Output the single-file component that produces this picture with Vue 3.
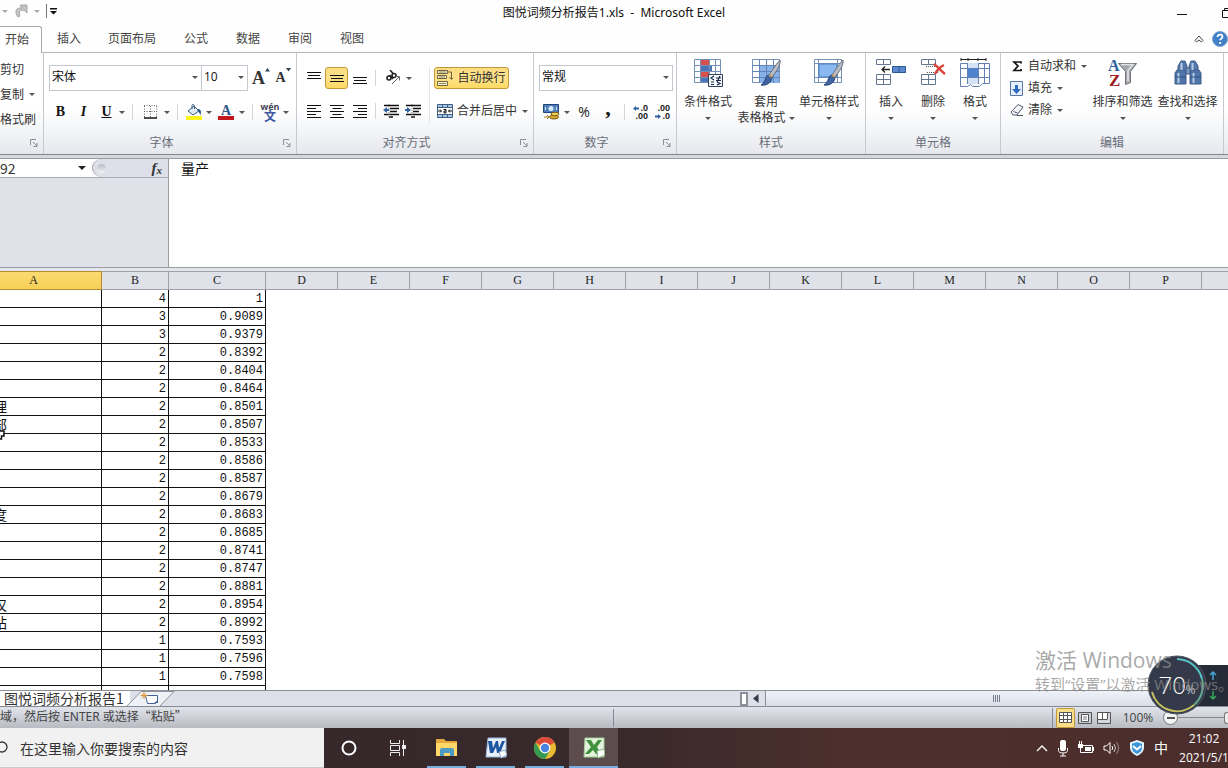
<script setup>
import { ref } from 'vue'

const tabs = ['开始', '插入', '页面布局', '公式', '数据', '审阅', '视图']
const columns = 'ABCDEFGHIJKLMNOPQ'.split('')
const rows = [
  ['', 4, '1'], ['', 3, '0.9089'], ['', 3, '0.9379'], ['', 2, '0.8392'], ['', 2, '0.8404'],
  ['', 2, '0.8464'], ['理', 2, '0.8501'], ['部', 2, '0.8507'], ['', 2, '0.8533'], ['', 2, '0.8586'],
  ['', 2, '0.8587'], ['', 2, '0.8679'], ['度', 2, '0.8683'], ['', 2, '0.8685'], ['', 2, '0.8741'],
  ['', 2, '0.8747'], ['', 2, '0.8881'], ['仅', 2, '0.8954'], ['站', 2, '0.8992'], ['', 1, '0.7593'],
  ['', 1, '0.7596'], ['', 1, '0.7598'], ['', '', ''],
]
const cellName = ref('92')
const formula = ref('量产')
const query = ref('')
</script>

<template>
  <div class="app">
    <header class="title-bar">
      <div class="quick">
        <i class="arr pale"></i>
        <button aria-label="恢复"><svg width="14" height="14" viewBox="0 0 14 14"><path d="M4 13C0 8 2 3 8 4l-2-3h7v8l-2-2C7 5 4 7 6 12z" fill="#c4c4c6" stroke="#9c9c9f" stroke-width=".8"/></svg></button>
        <i class="arr pale"></i>
        <span class="quick-line"></span>
        <svg width="7" height="7" viewBox="0 0 7 7"><path d="M0 0h7v1.500H0zM0 3h7L3.500 6.500z" fill="#111"/></svg>
      </div>
      <h1>图悦词频分析报告1.xls&nbsp; -&nbsp; Microsoft Excel</h1>
      <div class="win">
        <button aria-label="最小化"><svg width="10" height="12"><path d="M0 7.500h10" stroke="#111"/></svg></button>
        <button aria-label="还原"><svg width="12" height="12"><path d="M.5 3.500h8v7h-8zM2.500 3V1.500h8v8H9" fill="none" stroke="#111"/></svg></button>
      </div>
    </header>

    <nav class="tabs">
      <button v-for="(t, i) in tabs" :key="t" class="tab" :class="{ on: i === 0, wide: t.length > 2 }">{{ t }}</button>
      <div class="tab-tools">
        <button aria-label="折叠功能区"><svg width="10" height="8" viewBox="0 0 10 8"><path d="M1 5.500L5 1l4 4.500-1.500 1.500L5 5 2.500 7z" fill="#fff" stroke="#444"/></svg></button>
        <button aria-label="帮助"><svg width="16" height="16" viewBox="0 0 16 16"><circle cx="8" cy="8" r="7.500" fill="#4180c4" stroke="#7aa5d6"/><path d="M5.500 6c0-3.300 5-3.200 5-.3 0 1.800-2.300 1.800-2.300 3.600M8.200 11v2" stroke="#fff" stroke-width="1.800" fill="none"/></svg></button>
      </div>
    </nav>

    <section class="ribbon">
      <div class="group clip">
        <div class="body clip-body">
          <button>剪切</button>
          <button>复制<i class="arr"></i></button>
          <button>格式刷</button>
        </div>
        <div class="foot"><span></span><svg class="launch" width="8" height="8"><path d="M.5 6V.5H6M3 3l4 4M7 4v3.500H3.500" fill="none" stroke="#8a8f99"/></svg></div>
      </div>

      <div class="group font">
        <div class="body">
          <div class="row combos">
            <label class="combo name"><select aria-label="字体"><option>宋体</option></select><i class="arr"></i></label>
            <label class="combo size"><select aria-label="字号"><option>10</option></select><i class="arr"></i></label>
            <button class="grow" aria-label="增大字号"><b>A</b><svg width="5" height="4"><path d="M0 3.500h5L2.500 0z" fill="#345"/></svg></button>
            <button class="grow small" aria-label="减小字号"><b>A</b><svg width="5" height="4"><path d="M0 0h5L2.500 3.500z" fill="#345"/></svg></button>
          </div>
          <div class="row">
            <button class="w23 serif"><b>B</b></button>
            <button class="w23 serif"><b><i>I</i></b></button>
            <button class="w23 serif"><b><u>U</u></b></button>
            <i class="arr box8"></i><span class="sep"></span>
            <button class="w24" aria-label="边框"><svg width="14" height="14"><path d="M.5 1v11M6.500 1v11M12.500 1v11M0 .5h13M0 6.500h13" stroke="#666" stroke-dasharray="1 1.500"/><path d="M0 13h13" stroke="#111" stroke-width="1.500"/></svg></button>
            <i class="arr box8"></i><span class="sep"></span>
            <button class="w20" aria-label="填充颜色"><svg width="17" height="16" viewBox="0 0 17 16"><path d="M2 7l6-5 5 5-6 4z" fill="#dfeaf4" stroke="#3d5f80"/><path d="M6 5V1.500C6 0 8.500 0 8.500 2v3" fill="none" stroke="#3d5f80"/><path d="M12 5c3 0 3.500 3 2.500 6-1-1-1-3-3-4z" fill="#23598f"/><path d="M0 12h16v4H0z" fill="#fdf51b"/></svg></button>
            <i class="arr box10"></i>
            <button class="w24" aria-label="字体颜色"><span class="ink">A</span></button>
            <i class="arr box8"></i><span class="sep"></span>
            <button class="w22 wen" aria-label="拼音"><small>wén</small><span>文</span></button>
            <i class="arr box10"></i>
          </div>
        </div>
        <div class="foot"><span>字体</span><svg class="launch" width="8" height="8"><path d="M.5 6V.5H6M3 3l4 4M7 4v3.500H3.500" fill="none" stroke="#8a8f99"/></svg></div>
      </div>

      <div class="group align">
        <div class="body split">
          <div class="left">
            <div class="row first">
              <button class="w23" aria-label="顶端对齐"><svg width="14" height="14"><path d="M0 1.500h14M1 4.500h12M0 7.500h14" stroke="#111"/></svg></button>
              <button class="w23 hot" aria-label="垂直居中"><svg width="14" height="14"><path d="M0 4.500h14M1 7.500h12M0 10.500h14" stroke="#111"/></svg></button>
              <button class="w23" aria-label="底端对齐"><svg width="14" height="14"><path d="M0 6.500h14M1 9.500h12M0 12.500h14" stroke="#111"/></svg></button>
              <span class="sep tight"></span>
              <button class="w22 turn" aria-label="方向"><svg width="18" height="16" viewBox="0 0 18 16"><g fill="none" stroke="#222" stroke-width="1.600"><circle cx="4" cy="8" r="2"/><path d="M4.500 5l3.500 4"/><circle cx="9" cy="5.500" r="2"/><path d="M5 0l3.500 4"/></g><path d="M7 14l7-7M10.500 6.500h4v4" fill="none" stroke="#666"/></svg></button>
              <i class="arr box8"></i>
            </div>
            <div class="row">
              <button class="w23" aria-label="左对齐"><svg width="14" height="13"><path d="M0 .5h14M0 3.500h9M0 6.500h14M0 9.500h9M0 12.500h14" stroke="#111"/></svg></button>
              <button class="w23" aria-label="居中"><svg width="14" height="13"><path d="M0 .5h14M2.500 3.500h9M0 6.500h14M2.500 9.500h9M0 12.500h14" stroke="#111"/></svg></button>
              <button class="w23" aria-label="右对齐"><svg width="14" height="13"><path d="M0 .5h14M5 3.500h9M0 6.500h14M5 9.500h9M0 12.500h14" stroke="#111"/></svg></button>
              <span class="sep tight"></span>
              <button class="w22" aria-label="减少缩进量"><svg width="16" height="14"><path d="M1 1.500h15M7 4.500h9M7 7.500h7M1 10.500h15M6 13h4" stroke="#111" stroke-width="1.400"/><path d="M6 0v14" stroke="#777" stroke-dasharray="1 1"/><path d="M0 6l4-3v2h2v2H4v2z" fill="#2f62a3"/></svg></button>
              <button class="w22" aria-label="增加缩进量"><svg width="16" height="14"><path d="M1 1.500h15M8 4.500h8M8 7.500h6M1 10.500h15M6 13h4" stroke="#111" stroke-width="1.400"/><path d="M7 0v14" stroke="#777" stroke-dasharray="1 1"/><path d="M6 6L2 3v2H0v2h2v2z" fill="#2f62a3"/></svg></button>
            </div>
          </div>
          <div class="right">
            <div class="row first">
              <button class="hot wrap"><svg width="16" height="16"><path d="M.5.5h10v3H.5zM.5 5.500h9v3h-9zM.5 11.500h10v4H.5z" fill="#fff6cf" stroke="#6d6442"/><path d="M2 2h7M2 7h6M2 13.500h7" stroke="#8b8154"/><path d="M11 2h3.500v7M12.500 7l2 2.500L16 7.500" fill="none" stroke="#6d6442"/></svg>自动换行</button>
            </div>
            <div class="row">
              <button class="merge"><svg width="16" height="14"><path d="M.5.5h15v13H.5z" fill="#a9c4e4" stroke="#3d6187"/><path d="M1 4h14v6H1z" fill="#fff"/><path d="M5.500.5v3M10.500.5v3M5.500 10.500v3M10.500 10.500v3M.5 3.500h15M.5 10.500h15" stroke="#3d6187"/><path d="M1 7h3.500M11.500 7H15M3 5.500L4.500 7 3 8.500M13 5.500L11.500 7 13 8.500M6.500 5.500h2.500V9H7V7h2" stroke="#111" fill="none"/></svg>合并后居中<i class="arr"></i></button>
            </div>
          </div>
        </div>
        <div class="foot"><span>对齐方式</span><svg class="launch" width="8" height="8"><path d="M.5 6V.5H6M3 3l4 4M7 4v3.500H3.500" fill="none" stroke="#8a8f99"/></svg></div>
      </div>

      <div class="group number">
        <div class="body">
          <div class="row combos">
            <label class="combo format"><select aria-label="数字格式"><option>常规</option></select><i class="arr"></i></label>
          </div>
          <div class="row">
            <button class="w24" aria-label="会计数字格式"><svg width="17" height="16"><path d="M.5.5h15v8H.5z" fill="#4f7fbd" stroke="#1f4677"/><circle cx="8" cy="4.500" r="2.500" fill="#dce9f6"/><path d="M2.500 3v3M13.500 3v3" stroke="#dce9f6"/><ellipse cx="11" cy="13" rx="4.500" ry="2" fill="#d8a92f" stroke="#7a5c12"/><ellipse cx="12" cy="10" rx="4" ry="1.800" fill="#f2cf5c" stroke="#7a5c12"/><path d="M1 13h5M4 11l2 2-2 2" stroke="#a77720" fill="none"/></svg></button>
            <i class="arr box8"></i>
            <button class="w26 pct">%</button>
            <button class="w22 comma">,</button>
            <span class="sep snug"></span>
            <button class="w21 dec" aria-label="增加小数位数"><span><svg width="6" height="5"><path d="M0 2.500L3 0v1.500h3v2H3V5z" fill="#2f62a3"/></svg>.0</span><span>.00</span></button>
            <button class="w22 dec" aria-label="减少小数位数"><span>.00</span><span><svg width="6" height="5"><path d="M6 2.500L3 0v1.500H0v2h3V5z" fill="#2f62a3"/></svg>.0</span></button>
          </div>
        </div>
        <div class="foot"><span>数字</span><svg class="launch" width="8" height="8"><path d="M.5 6V.5H6M3 3l4 4M7 4v3.500H3.500" fill="none" stroke="#8a8f99"/></svg></div>
      </div>

      <div class="group styles">
        <div class="body bigs">
          <button class="big w58">
            <svg width="30" height="30"><path d="M1.500 1.500h26v23h-26z" fill="#fff" stroke="#7791b5"/><path d="M8 2h8v6H8zM8 14h8v5H8z" fill="#d8504e"/><path d="M8 8h11v6H8zM8 19h8v5H8z" fill="#4c74b8"/><path d="M7.500 1v24M16.500 1v24M22.500 1v24M1 7.500h27M1 13.500h27M1 19.500h27" stroke="#7791b5"/><path d="M15.500 16.500h14v12h-14z" fill="#f5f8fc" stroke="#33415c"/><path d="M21 18l-3 2 3 2M18 24h3M18 26.500h3M23 20h5M23 22.500h5M27 18l-3 6M24 24l3 1.500-3 1.500" fill="none" stroke="#1c2a45" stroke-width="1.200"/></svg>
            <span>条件格式</span><i class="arr"></i>
          </button>
          <button class="big w58">
            <svg width="30" height="30"><path d="M1.500 1.500h27v23h-27z" fill="#fff" stroke="#7791b5"/><path d="M8 8h20v17H8z" fill="#86b2e8"/><path d="M8.500 1v24M15.500 1v24M22.500 1v24M1 7.500h28M1 13.500h28M1 19.500h28" stroke="#6285b8"/><path d="M29 2c1 5-4 12-8 17l-3-2C22 11 26 5 29 2z" fill="#b8bcc4" stroke="#666d7a"/><path d="M18 17c-4 0-3 7-8 10 5 1 11-2 11-8z" fill="#3f64a0" stroke="#2d4979"/><path d="M18 17l3 2" stroke="#c7975b" stroke-width="2"/></svg>
            <span>套用</span><span class="two">表格格式<i class="arr"></i></span>
          </button>
          <button class="big w68">
            <svg width="32" height="30"><path d="M1.500 1.500h27v23h-27z" fill="#fff" stroke="#7791b5"/><path d="M1 5.500h28M1 19.500h28M5.500 1v24M24.500 1v24" stroke="#7791b5"/><path d="M6 6h18v13H6z" fill="#8ab8f0" stroke="#4e7fc2"/><path d="M30 2c1 5-4 12-8 17l-3-2C23 11 27 5 30 2z" fill="#b8bcc4" stroke="#666d7a"/><path d="M19 17c-4 0-3 7-8 10 5 1 11-2 11-8z" fill="#3f64a0" stroke="#2d4979"/><path d="M19 17l3 2" stroke="#c7975b" stroke-width="2"/></svg>
            <span>单元格样式</span><i class="arr"></i>
          </button>
        </div>
        <div class="foot"><span>样式</span></div>
      </div>

      <div class="group cells">
        <div class="body bigs">
          <button class="big w42">
            <svg width="30" height="30"><path d="M.5 1.500h14v5H.5zM7.500 1.500v5M.5 16.500h14v10H.5zM7.500 16.500v10M.5 21.500h14" fill="#fff" stroke="#667791"/><path d="M16.500 8.500h13v6h-13z" fill="#5c89cd" stroke="#2e5796"/><path d="M23 8v7" stroke="#2e5796"/><path d="M6 11.500h8M9 8.500l-3 3 3 3" fill="none" stroke="#222" stroke-width="1.300"/></svg>
            <span>插入</span><i class="arr"></i>
          </button>
          <button class="big w42">
            <svg width="26" height="30"><path d="M1.500 1.500h14v5h-14zM8.500 1.500v5M1.500 16.500h14v10h-14zM8.500 16.500v10M1.500 21.500h14" fill="#fff" stroke="#667791"/><path d="M6 8.500h12v6H6" fill="none" stroke="#555" stroke-dasharray="1 1"/><path d="M14 6c3 2 7 7 11 10M24 7c-4 2-7 5-9 9" stroke="#dc4237" stroke-width="2.400" fill="none"/></svg>
            <span>删除</span><i class="arr"></i>
          </button>
          <button class="big w42">
            <svg width="32" height="30"><path d="M2 1.500h25M2 0v3M27 0v3M9 0v3M19 0v3" stroke="#222"/><path d="M1.500 5.500h29v20h-7l-3 3h-7l-2-2-3 2h-7z" fill="#fff" stroke="#6281b1"/><path d="M9 11h10v8H9z" fill="#4f83d0"/><path d="M9 5h10v5H9zM9 20h10v6H9z" fill="#d4e3f6"/><path d="M8.500 5v21M19.500 5v21M25.500 5v20M1 10.500h29M1 19.500h29" stroke="#6281b1"/></svg>
            <span>格式</span><i class="arr"></i>
          </button>
        </div>
        <div class="foot"><span>单元格</span></div>
      </div>

      <div class="group edit">
        <div class="body edit-body">
          <div class="edit-list">
            <button><svg width="14" height="14"><path d="M11 4.500V3H4l4 4-4 4.500h7V10" fill="none" stroke="#111" stroke-width="1.700"/></svg>自动求和<i class="arr"></i></button>
            <button><svg width="14" height="15"><path d="M.5.5h12v14H.5z" fill="#e7f0fa" stroke="#5576a5"/><path d="M5 4h3v4h3l-4.500 5L2 8h3z" fill="#2f6bc0"/></svg>填充<i class="arr"></i></button>
            <button><svg width="14" height="14"><path d="M1 9l7-7.500 5 2.500-6 8H3z" fill="#f5f6f9" stroke="#4e5668"/><path d="M3.500 8.500l4 1.500M7 12.500h6" stroke="#4e5668"/></svg>清除<i class="arr"></i></button>
          </div>
          <button class="big w65">
            <svg width="30" height="30"><path d="M10.500 5.500h18l-6 8v11l-5 2v-13z" fill="#a5a8ae" stroke="#6d7077"/><path d="M13 6.500h12l-5 6v11" fill="none" stroke="#e1e3e7" stroke-width="1.500"/><text x="0" y="13" font-family="Liberation Serif" font-weight="bold" font-size="16" fill="#2d5f9e">A</text><text x="1" y="28" font-family="Liberation Serif" font-weight="bold" font-size="17" fill="#9d2020">Z</text></svg>
            <span>排序和筛选</span><i class="arr"></i>
          </button>
          <button class="big w65">
            <svg width="28" height="30"><path d="M7 3h4l2 5v6H4V8zM17 3h4l3 5v6h-9V8z" fill="#5478ab" stroke="#3e5d8c"/><path d="M3 12h8l1 3v11H1V15zM17 12h8l2 3v11H16V15z" fill="#4f74aa" stroke="#3e5d8c"/><path d="M12 10h4v6h-4z" fill="#7c99c2" stroke="#3e5d8c"/><path d="M4.500 15v10M19.500 15v10M7.500 5v7M18.500 5v7" stroke="#b8cbe4" stroke-width="2"/><path d="M1 19h11M16 19h11" stroke="#35527f"/></svg>
            <span>查找和选择</span><i class="arr"></i>
          </button>
        </div>
        <div class="foot"><span>编辑</span></div>
      </div>
    </section>

    <section class="formula">
      <div class="name-side">
        <div class="name-row">
          <input v-model="cellName" aria-label="名称框"><i class="arr dark"></i>
          <div class="fx"><span class="knob"></span><button aria-label="插入函数"><i>f</i><i class="x">x</i></button></div>
        </div>
      </div>
      <textarea v-model="formula" aria-label="编辑栏"></textarea>
    </section>

    <main class="sheet">
      <table>
        <colgroup><col class="ca"><col class="cb"><col class="cc"><col v-for="n in 14" :key="n" class="cn"></colgroup>
        <thead><tr><th v-for="c in columns" :key="c" :class="{ sel: c === 'A' }">{{ c }}</th></tr></thead>
        <tbody>
          <tr v-for="(r, i) in rows" :key="i">
            <td class="word">{{ r[0] }}</td><td>{{ r[1] }}</td><td>{{ r[2] }}</td>
          </tr>
        </tbody>
      </table>
      <svg class="cursor" width="6" height="11"><path d="M0 2h4v5H1.500v3H0" fill="#fff" stroke="#111" stroke-width="1.500"/></svg>
    </main>

    <div class="sheet-bar">
      <button class="sheet-tab">图悦词频分析报告1</button>
      <button class="new-tab" aria-label="插入工作表"><svg width="50" height="15"><path d="M0 15L14 .5h33L33 15" fill="#eef1f6" stroke="#8d929c"/><path d="M18.500 4.500h12v6l-2 2h-8z" fill="#fff" stroke="#45639a"/><path d="M27 12l4-3v3z" fill="#45639a"/><path d="M17 1v7M13.500 4.500h7M15 2.500l4 4M19 2.500l-4 4" stroke="#dd9a3c"/></svg></button>
      <div class="hscroll">
        <span class="split-box"></span>
        <button aria-label="向左滚动"><svg width="6" height="9"><path d="M5.500 0v9L0 4.500z" fill="#333a48"/></svg></button>
        <div class="thumb"><svg width="8" height="7"><path d="M.5 0v7M2.500 0v7M4.500 0v7M6.500 0v7" stroke="#777e8b"/></svg></div>
      </div>
    </div>

    <footer class="status">
      <span class="msg">域，然后按 ENTER 或选择<span class="cjk">“粘贴”</span></span>
      <span class="status-mid"></span>
      <div class="views">
        <button class="view on" aria-label="普通"><svg width="13" height="11"><path d="M.5.5h12v10H.5zM4.500 0v11M8.500 0v11M0 3.500h13M0 7.500h13" fill="#fff" stroke="#555"/></svg></button>
        <button class="view" aria-label="页面布局"><svg width="14" height="12"><path d="M.5.5h13v11H.5z" fill="#c9ccd2" stroke="#555"/><path d="M3.500 2.500h7v7h-7z" fill="#fff" stroke="#555"/><path d="M5 5h4M5 7h4" stroke="#777"/></svg></button>
        <button class="view" aria-label="分页预览"><svg width="14" height="12"><path d="M.5.5h13v11H.5z" fill="#d5d7dc" stroke="#555"/><path d="M1 1h4v6H1zM6 1h4v6H6z" fill="#fff"/><path d="M5.500 0v7.500M10.500 0v7.500M1 7.500h9" stroke="#555"/></svg></button>
        <button class="zoom">100%</button>
        <button class="minus" aria-label="缩小"></button>
        <span class="track"></span><span class="slider"></span>
      </div>
    </footer>

    <div class="taskbar">
      <div class="search"><svg width="8" height="14"><circle cx="2" cy="6" r="5" fill="none" stroke="#333" stroke-width="1.300"/></svg><input v-model="query" placeholder="在这里输入你要搜索的内容" aria-label="搜索"></div>
      <button class="task" aria-label="Cortana"><svg width="16" height="16"><circle cx="8" cy="8" r="6.500" fill="none" stroke="#fff" stroke-width="2"/></svg></button>
      <button class="task" aria-label="任务视图"><svg width="17" height="16"><path d="M1.500 0v3.500h9V0M1.500 16v-3.500h9V16M1.500 5.500h9v5h-9zM14.500 0v16" fill="none" stroke="#eee"/><path d="M13 5h4v4h-4z" fill="#eee"/></svg></button>
      <button class="task run" aria-label="文件资源管理器"><svg width="22" height="20"><path d="M0 1h8l2 2h11v15H0z" fill="#e3a93c"/><path d="M0 5h21v13H0z" fill="#ffd869"/><path d="M4 18v-6q0-2 2-2h10q2 0 2 2v6h-4v-3H8v3z" fill="#4d9bc4"/></svg></button>
      <button class="task run" aria-label="Word"><svg width="22" height="22"><path d="M3 1h18v19H1z" fill="#e8f0fa" stroke="#9bb8dd"/><path d="M3 4h4l1 7 3-7h2l1 7 3-7h3l-5 12h-3l-1-6-3 6H5z" fill="#1d559f"/><path d="M14 15l6-2 2 5-6 3z" fill="#fff" stroke="#8ba6c8"/></svg></button>
      <button class="task run" aria-label="Chrome"><svg width="22" height="22" viewBox="0 0 22 22"><circle cx="11" cy="11" r="11" fill="#e9b92f"/><path d="M11 11L1.500 5.500A11 11 0 0 1 20.500 5.500z" fill="#dc4b3c"/><path d="M1.500 5.500A11 11 0 0 0 11 22l5-8.500H6z" fill="#349a53"/><circle cx="11" cy="11" r="5.400" fill="#fff"/><circle cx="11" cy="11" r="4.200" fill="#4884df"/></svg></button>
      <button class="task run active" aria-label="Excel"><svg width="22" height="22"><path d="M2 1h19v19H1z" fill="#e4f2dd" stroke="#a5cf97"/><path d="M3 3h5l3 5 4-5h4l-5 7 4 7h-5l-3-4-4 4H2l6-7z" fill="#3f9140"/><path d="M14 14l7-2 1 6-7 3z" fill="#fff" stroke="#8cb382"/></svg></button>
      <div class="tray">
        <svg width="12" height="8"><path d="M1 7l5-5 5 5" fill="none" stroke="#fff" stroke-width="1.300"/></svg>
        <svg width="12" height="17"><rect x="3" y="0" width="6" height="11" rx="2" fill="#fff"/><path d="M1.500 8v2.500q0 2.500 4.500 2.500t4.500-2.500V8M6 13v3M3 16h6" fill="none" stroke="#fff"/></svg>
        <svg width="16" height="14"><path d="M5 4.500h9.500v7H5" fill="none" stroke="#fff"/><path d="M7 6h6v4H7zM14 6h2v4h-2zM0 3h5v4H0z" fill="#fff"/><path d="M1.500 0v3M3.500 0v3M2.500 7v4.500H6" fill="none" stroke="#fff"/></svg>
        <svg width="17" height="14"><path d="M1 5h2.500L7 1.500v11L3.500 9H1z" fill="none" stroke="#fff"/><path d="M9 5q1.500 2 0 4" fill="none" stroke="#fff"/><path d="M11 3q3 4 0 8" fill="none" stroke="#ccc"/><path d="M13.500 1q4 6 0 12" fill="none" stroke="#998f90"/></svg>
        <svg width="16" height="16"><path d="M8 0l7 2.500v5Q15 13 8 16 1 13 1 7.500v-5z" fill="#eaf6ff"/><path d="M8 2l5 1.800v4Q13 12 8 14 3 12 3 7.800v-4z" fill="#3d97d6"/><path d="M4 6l4 3.500L12 6" fill="none" stroke="#fff" stroke-width="2"/></svg>
        <span class="ime">中</span>
        <time><span>21:02</span><span>2021/5/1</span></time>
      </div>
    </div>

    <div class="gauge-panel"><svg width="8" height="30"><path d="M4 9V1M1 4l3-3 3 3" fill="none" stroke="#44a6d8" stroke-width="1.500"/><path d="M4 20v8M1 25l3 3 3-3" fill="none" stroke="#36a65a" stroke-width="1.500"/></svg></div>
    <div class="gauge">
      <svg width="60" height="60"><circle cx="30" cy="30" r="29" fill="#343a49" stroke="#4c5363"/><path d="M30 4a26 26 0 0 1 25 20" fill="none" stroke="#58c2c4" stroke-width="2"/><path d="M55 24a26 26 0 0 1-8 26" fill="none" stroke="#63a88d" stroke-width="2"/><path d="M47 50A26 26 0 0 1 5 37" fill="none" stroke="#c7c160" stroke-width="2"/></svg>
      <strong>70<small>%</small></strong>
    </div>
    <div class="watermark"><p>激活 Windows</p><p>转到“设置”以激活 Windows。</p></div>
  </div>
</template>

<style>
html, body { overflow: hidden; }
</style>

<style scoped>
.app { position: relative; height: 100vh; display: flex; flex-direction: column; overflow: hidden; background: #fff; color: #333; font: 12px/16px "Open Sans", "Noto Sans CJK SC", sans-serif; }
* { box-sizing: border-box; }
button { display: flex; align-items: center; justify-content: center; border: 0; padding: 0; background: none; color: inherit; font: inherit; white-space: nowrap; }
svg { display: block; flex: none; }
.arr { flex: none; width: 0; height: 0; border: 3px solid transparent; border-top-color: #555; border-bottom: 0; }
.arr.pale { border-top-color: #aaa; }
.arr.dark { border-width: 4px 4px 0; border-top-color: #222; }
.box8 { margin: 0 1px; }
.box10 { margin: 0 2px; }

.title-bar { flex: none; height: 26px; display: grid; grid-template-columns: 1fr auto 1fr; align-items: center; background: #fefefe; }
.quick { display: flex; align-items: center; gap: 6px; padding: 0 0 4px 2px; }
.quick-line { width: 1px; height: 14px; background: #777; }
.quick > svg { margin-left: -3px; }
h1 { margin: 0; font: 12px/16px "Noto Sans", "Noto Sans CJK SC", sans-serif; color: #111; }
.win { display: flex; justify-content: flex-end; gap: 35px; margin-right: -6px; }

.tabs { flex: none; height: 27px; display: flex; border-bottom: 1px solid #b3b6bb; background: #fefefe; }
.tab { width: 48px; margin-right: 4px; color: #444; }
.tab:nth-child(2) { margin-left: 3px; margin-right: 0; }
.tab.wide { width: 70px; margin: 0 5px 0 4px; }
.tab.on { width: 42px; margin: 0 0 -1px; padding-right: 7px; border: solid #a5a8ad; border-width: 1px 1px 0 0; border-radius: 0 3px 0 0; background: #fff; }
.tab-tools { margin: 0 0 0 auto; display: flex; align-items: center; gap: 8px; }

.ribbon { flex: none; display: flex; height: 102px; border-bottom: 1px solid #85888f; background: linear-gradient(#fff 55%, #f2f3f6 80%, #e6e8ee); overflow: hidden; }
.group { flex: none; display: flex; flex-direction: column; border-right: 1px solid #c6c9cf; }
.clip { width: 44px; }
.font { width: 253px; }
.align { width: 237px; }
.number { width: 143px; }
.styles { width: 189px; }
.cells { width: 135px; }
.edit { width: 223px; }
.body { height: 82px; padding: 12px 0 0 5px; }
.foot { height: 16px; display: flex; align-items: center; color: #686d78; }
.foot span { flex: 1; text-align: center; }
.launch { margin: 0 5px 0 4px; }
.row { display: flex; align-items: center; height: 22px; }
.row.combos { height: 26px; margin-bottom: 10px; }
.row.first { margin-bottom: 11px; }
.clip-body { padding: 4px 0 0; display: flex; flex-direction: column; align-items: flex-start; }
.clip-body button { height: 25px; gap: 5px; }
.combo { position: relative; height: 26px; }
.combo select { appearance: none; width: 100%; height: 26px; border: 1px solid #c5c8ce; border-radius: 0; background: #fff; padding: 0 0 2px 2px; font: inherit; color: #111; }
.combo .arr { position: absolute; right: 4px; top: 11px; }
.combo.name { width: 153px; }
.combo.size { width: 47px; margin-left: -1px; }
.combo.format { width: 134px; }
.row .grow { align-items: flex-start; width: 22px; height: 20px; font: 18px/20px "Liberation Serif", serif; margin-left: 2px; }
.row .grow.small { font-size: 14px; width: 18px; }
.w20 { width: 20px; } .w21 { width: 21px; } .w22 { width: 22px; } .w23 { width: 23px; }
.w24 { width: 24px; } .w26 { width: 26px; } .w42 { width: 42px; } .w58 { width: 58px; }
.w65 { width: 65px; } .w68 { width: 68px; }
.row button { height: 22px; flex: none; }
.serif { font: 14px/16px "Liberation Serif", serif; color: #111; }
.sep { width: 1px; height: 16px; margin: 0 6px; background: #d2d5da; }
.sep.tight { margin: 0 4px; }
.sep.snug { margin: 0 5px; }
.ink { height: 16px; width: 16px; border-bottom: 4px solid #c3161c; color: #2d558d; font: bold 14px/13px "Liberation Serif", serif; }
.row .wen { flex-direction: column; font-weight: 700; color: #445; }
.wen small { font-size: 9px; line-height: 9px; }
.wen span { font-size: 12px; line-height: 12px; color: #3c57a0; }
.hot { border: 1px solid #c2983a; border-radius: 3px; background: linear-gradient(#fbdc80, #fde28a 50%, #fdd963); }
.split { display: flex; padding-top: 14px; }
.left { width: 127px; }
.right { padding-left: 4px; border-left: 1px solid #e2e4e8; height: 56px; }
.wrap { width: 75px; gap: 4px; }
.turn { margin-left: 3px; }
.merge { gap: 4px; padding-left: 3px; }
.merge .arr { margin-left: 1px; }
.pct { font-size: 14px; color: #222; }
.comma { font: bold 22px/22px "Liberation Serif", serif; padding-bottom: 9px; color: #111; }
.row .dec { flex-direction: column; align-items: flex-end; justify-content: center; padding-right: 3px; font: bold 9px/8px "Liberation Sans", sans-serif; color: #222; }
.dec span { display: flex; align-items: center; gap: 1px; }
.bigs, .edit-body { display: flex; padding: 5px 0 0 2px; }
.cells .bigs { padding-left: 4px; }
.big { flex-direction: column; justify-content: flex-start; align-self: flex-start; }
.big svg { margin-bottom: 6px; }
.big > .arr { margin-top: 7px; }
.big .two { display: flex; align-items: center; gap: 3px; }
.edit-list { width: 87px; padding-left: 7px; margin-top: -3px; }
.edit-list button { height: 22px; gap: 4px; }
.edit-list .arr { margin-left: 1px; }

.formula { flex: none; display: flex; height: 110px; margin-top: 3px; border: solid #9a9da4; border-width: 1px 0; background: #dfe2e9; box-shadow: 0 -3px #d6d8de; }
.name-side { width: 169px; border-right: 1px solid #9a9da4; }
.name-row { height: 19px; display: flex; align-items: center; border-bottom: 1px solid #a9acb3; background: #fff; }
.name-row input { flex: none; width: 78px; height: 17px; border: 0; padding: 0; background: none; font: 14px/17px "Noto Sans CJK SC", sans-serif; color: #333; }
.fx { flex: 1; height: 18px; display: flex; align-items: center; justify-content: space-between; margin-left: 6px; padding: 0 6px 0 4px; border-left: 1px solid #a3a6ad; border-radius: 9px 0 0 9px; background: #dde0e8; }
.knob { width: 9px; height: 9px; border-radius: 50%; background: linear-gradient(#b5b9c2, #f5f6f8); }
.fx button { font: bold 15px/16px "Liberation Serif", serif; }
.fx .x { font-size: 11px; padding-top: 3px; }
textarea { flex: 1; border: 0; outline: 0; resize: none; padding: 0 12px; background: #fff; font: 14px/18px "Noto Sans CJK SC", sans-serif; color: #111; }

.sheet { position: relative; flex: 1; min-height: 0; margin-top: 3px; overflow: hidden; background: #fff; box-shadow: 0 -3px #e3e5ea; }
table { table-layout: fixed; width: 1274px; border-collapse: separate; border-spacing: 0; }
.ca { width: 102px; } .cb { width: 67px; } .cc { width: 97px; } .cn { width: 72px; }
th { height: 19px; padding: 0; border: solid #9ea1a8; border-width: 1px 1px 1px 0; background: #dfe2e9; font: 12px/17px "Liberation Serif", serif; color: #222; }
th.sel { background: linear-gradient(#fbdc72, #f6cf56); border-color: #b58c32; padding-right: 34px; }
td { height: 18px; padding: 2px 2px 0 0; border: solid #111; border-width: 0 1px 1px 0; text-align: right; font: 12px/15px "Liberation Mono", monospace; color: #111; overflow: hidden; }
td.word { text-align: left; text-indent: -7px; font: 14px/15px "Noto Sans CJK SC", sans-serif; padding-top: 0; }
.cursor { position: absolute; left: 0; top: 158px; }

.sheet-bar { flex: none; height: 16px; display: flex; border-top: 1px solid #8d9099; background: #dde0e8; }
.sheet-tab { height: 15px; padding: 0 6px 0 4px; background: #fff; font: 14px/15px "Noto Sans CJK SC", sans-serif; }
.new-tab { margin-left: -3px; }
.hscroll { margin-left: auto; width: 488px; display: flex; align-items: center; gap: 5px; }
.split-box { width: 8px; height: 14px; border: 2px solid #8b8f98; background: #fff; }
.thumb { flex: 1; height: 15px; margin-left: 1px; display: flex; align-items: center; justify-content: center; border-left: 1px solid #8b8f98; background: linear-gradient(#f0f2f8, #d9dde7); }

.status { flex: none; height: 22px; display: flex; align-items: center; border-top: 1px solid #858992; background: linear-gradient(#e1e4eb, #b8bbc2); color: #444; }
.msg { width: 613px; padding-bottom: 2px; white-space: nowrap; font-family: "Noto Sans", "Noto Sans CJK SC", sans-serif; }
.cjk { font-family: "Noto Sans CJK SC", sans-serif; }
.status-mid { width: 1px; height: 18px; background: #858992; }
.views { margin-left: auto; width: 176px; display: flex; align-items: center; height: 20px; border-left: 1px solid #858992; padding-left: 3px; }
.view { flex: none; width: 19px; height: 20px; }
.view.on { border: 1px solid #c2983a; border-radius: 2px; background: #fbdf88; }
.zoom { flex: none; width: 44px; margin-left: 3px; }
.minus { width: 15px; height: 15px; margin-left: 3px; border: 1px solid #777; border-radius: 50%; background: #f3f4f6; flex: none; }
.minus::after { content: ""; width: 8px; height: 2px; background: #555; }
.track { flex: 1; height: 1px; background: #888; }
.slider { width: 4px; height: 12px; border: 1px solid #777; border-right: 0; border-radius: 3px 0 0 3px; background: #eee; }

.taskbar { flex: none; height: 40px; display: flex; background: linear-gradient(90deg, #33262a, #38292b 50%, #4d302c 70%, #4b2e2b); color: #fff; }
.search { width: 324px; display: flex; align-items: center; background: #f2f1f1; border-bottom: 1px solid #ccc; }
.search input { flex: 1; height: 38px; border: 0; outline: 0; padding: 0; margin-left: 12px; background: none; font: 14px/20px "Noto Sans CJK SC", sans-serif; color: #222; }
.search input::placeholder { color: #333; opacity: 1; }
.task { position: relative; width: 49px; height: 40px; }
.run::after { content: ""; position: absolute; left: 5px; right: 5px; bottom: 0; height: 2px; background: #76aee0; }
.active { background: #5d4c4e; }
.active::after { left: 0; right: 0; }
.tray { margin-left: auto; width: 192px; display: flex; align-items: center; justify-content: space-between; }
.ime { font-size: 14px; }
time { width: 50px; display: flex; flex-direction: column; align-items: center; line-height: 19px; margin-left: 4px; margin-right: -1px; }
.tray > svg { margin-right: 2px; }

.gauge-panel { position: absolute; right: 0; bottom: 62px; width: 50px; height: 41px; display: flex; align-items: center; justify-content: flex-end; padding-right: 11px; background: #262b38; }
.gauge { position: absolute; right: 21px; bottom: 53px; width: 60px; height: 60px; }
.gauge strong { position: absolute; left: 0; right: 0; top: 16px; text-align: center; font: 300 24px/28px "Open Sans", sans-serif; color: #fff; }
.gauge small { font-size: 12px; }
.watermark { position: absolute; left: calc(100% - 193px); bottom: 73px; color: rgba(140, 140, 140, .75); white-space: nowrap; }
.watermark p { margin: 0; font-size: 15px; line-height: 22px; }
.watermark p:first-child { font-size: 21px; line-height: 26px; }
</style>
